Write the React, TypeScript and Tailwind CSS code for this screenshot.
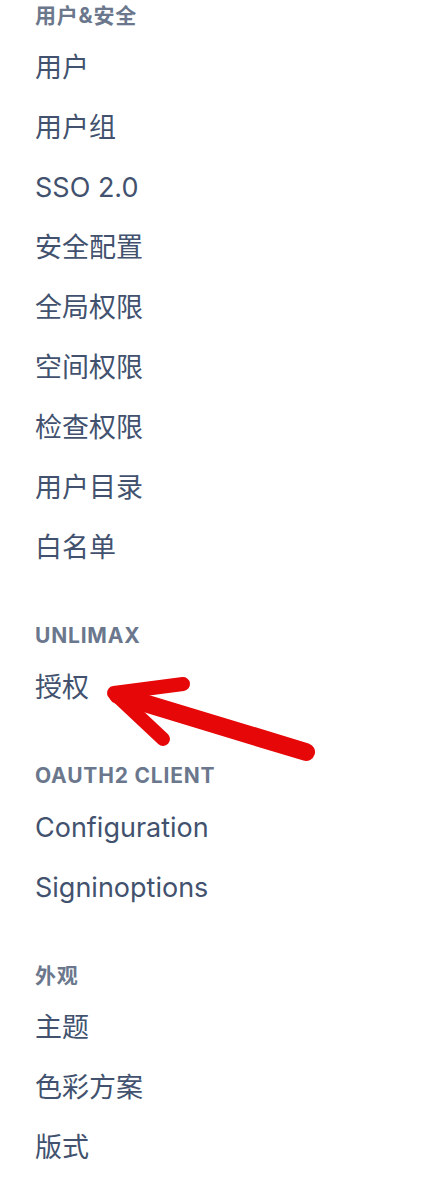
const sections = [
  {
    title: "用户&安全",
    items: ["用户", "用户组", "SSO 2.0", "安全配置", "全局权限", "空间权限", "检查权限", "用户目录", "白名单"],
  },
  { title: "UNLIMAX", items: ["授权"] },
  { title: "OAUTH2 CLIENT", items: ["Configuration", "Signinoptions"] },
  { title: "外观", items: ["主题", "色彩方案", "版式"] },
];

function Arrow() {
  return (
    <svg className="pointer-events-none absolute left-0 top-0" width="430" height="1180" viewBox="0 0 430 1180">
      <g stroke="#e60808" fill="none" strokeLinecap="round" strokeLinejoin="round">
        <polyline points="183,684 114,693 163,739" strokeWidth="14" />
        <line x1="118" y1="695" x2="306" y2="752" strokeWidth="18" />
      </g>
    </svg>
  );
}

export default function App() {
  return (
    <div
      className="relative h-[1180px] w-[430px] overflow-hidden bg-white pl-[35px]"
      style={{ fontFamily: 'Inter, "Noto Sans CJK SC", sans-serif' }}
    >
      <nav className="flex flex-col gap-[42px]">
        {sections.map((section) => (
          <div key={section.title} className="flex flex-col">
            <h3 className="flex h-8 items-center text-[21px] font-bold uppercase tracking-[0.8px] text-[#6b778c]">
              {section.title}
            </h3>
            <ul className="mt-[6px] flex flex-col">
              {section.items.map((item) => (
                <li key={item} className="flex h-[60px] items-center text-[27px] text-[#42526e]">
                  {item}
                </li>
              ))}
            </ul>
          </div>
        ))}
      </nav>
      <Arrow />
    </div>
  );
}
